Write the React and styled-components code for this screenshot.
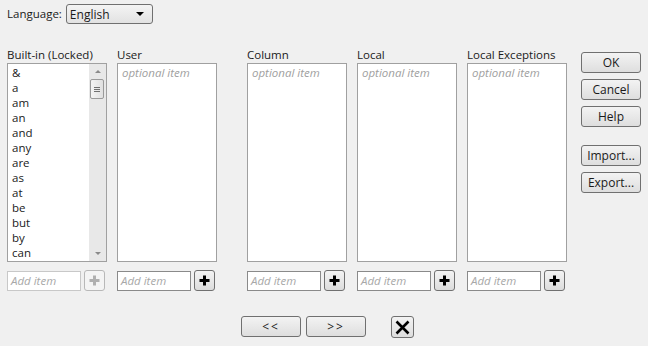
import React from "react";
import styled, { createGlobalStyle } from "styled-components";

const Global = createGlobalStyle`
  html, body { margin: 0; padding: 0; background: #f0f0f0; }
  body { font-family: "Open Sans", "Noto Sans", sans-serif; font-size: 11.5px; color: #1a1a1a; }
  * { box-sizing: border-box; }
`;

const Page = styled.div`
  width: 648px;
  height: 346px;
  background: #f0f0f0;
  padding: 4px 0 0 7px;
  display: flex;
  flex-direction: column;
`;

const TopRow = styled.div`
  display: flex;
  align-items: center;
  gap: 4px;
  height: 20px;
`;

const Label = styled.span`
  line-height: 16px;
  height: 16px;
  white-space: nowrap;
`;

const Select = styled.div`
  width: 87px;
  height: 20px;
  border: 1px solid #707070;
  border-radius: 3px;
  background: linear-gradient(#f4f4f4, #e2e2e2);
  display: flex;
  align-items: center;
  justify-content: space-between;
  padding: 0 8px 0 3px;
  font-size: 12px;
`;

const Caret = styled.span`
  width: 0;
  height: 0;
  border-left: 4px solid transparent;
  border-right: 4px solid transparent;
  border-top: 4px solid #000;
`;

const Main = styled.div`
  display: flex;
  margin-top: 23px;
`;

const Column = styled.div`
  display: flex;
  flex-direction: column;
  width: 100px;
  margin-left: ${(p) => p.$gap || 0}px;
`;

const ListBox = styled.div`
  position: relative;
  height: 199px;
  border: 1px solid #a0a0a0;
  background: #fff;
  padding: 1px 0 0 4px;
  overflow: hidden;
`;

const Item = styled.div`
  line-height: 15px;
  height: 15px;
  font-size: 11.5px;
`;

const Placeholder = styled.div`
  line-height: 15px;
  font-style: italic;
  color: #a0a0a0;
  font-size: 11.5px;
`;

const Scrollbar = styled.div`
  position: absolute;
  top: 0;
  right: 0;
  bottom: 0;
  width: 17px;
  background: #e8e8e8;
  display: flex;
  flex-direction: column;
  align-items: center;
`;

const Arrow = styled.div`
  height: 15px;
  width: 100%;
  display: flex;
  align-items: center;
  justify-content: center;
  &::after {
    content: "";
    border-left: 3px solid transparent;
    border-right: 3px solid transparent;
    ${(p) => (p.$down ? "border-top: 3px solid #8a8a8a;" : "border-bottom: 3px solid #8a8a8a;")}
  }
`;

const Thumb = styled.div`
  width: 14px;
  height: 20px;
  margin-left: -1px;
  border: 1px solid #9a9a9a;
  border-radius: 2px;
  background: linear-gradient(90deg, #f4f4f4, #e0e0e0);
  display: flex;
  flex-direction: column;
  align-items: center;
  justify-content: center;
  gap: 1px;
`;

const Grip = styled.span`
  width: 6px;
  height: 1px;
  background: #707070;
`;

const Spacer = styled.div`
  flex: 1;
`;

const AddRow = styled.div`
  display: flex;
  align-items: center;
  gap: 3px;
  margin-top: 8px;
  height: 21px;
`;

const AddInput = styled.div`
  width: 74px;
  height: 20px;
  border: 1px solid ${(p) => (p.$disabled ? "#c8c8c8" : "#8a8a8a")};
  background: #fff;
  padding-left: 3px;
  line-height: 18px;
  font-style: italic;
  color: #a8a8a8;
  font-size: 11.5px;
`;

const PlusBtn = styled.div`
  width: 21px;
  height: 21px;
  border: 1px solid ${(p) => (p.$disabled ? "#b8b8b8" : "#707070")};
  border-radius: 3px;
  background: ${(p) => (p.$disabled ? "#f4f4f4" : "linear-gradient(#f4f4f4, #dcdcdc)")};
  display: flex;
  align-items: center;
  justify-content: center;
`;

const ButtonCol = styled.div`
  display: flex;
  flex-direction: column;
  margin-left: 14px;
  margin-top: 5px;
  width: 60px;
`;

const Btn = styled.div`
  width: ${(p) => p.$w || 60}px;
  height: 21px;
  border: 1px solid #707070;
  border-radius: 3px;
  background: linear-gradient(#f3f3f3, #dedede);
  display: flex;
  align-items: center;
  justify-content: center;
  font-size: 12px;
  margin-top: ${(p) => p.$mt || 0}px;
  letter-spacing: ${(p) => p.$ls || 0}px;
`;

const BottomRow = styled.div`
  display: flex;
  justify-content: center;
  margin-top: 25px;
  gap: 5px;
`;

const CloseBtn = styled.div`
  width: 23px;
  height: 22px;
  margin-left: 20px;
  border: 1px solid #707070;
  border-radius: 3px;
  background: linear-gradient(#f3f3f3, #dedede);
  display: flex;
  align-items: center;
  justify-content: center;
`;

const Plus = ({ color }) => (
  <svg width="11" height="11" viewBox="0 0 11 11">
    <path d="M5.5 0.5v10M0.5 5.5h10" stroke={color} strokeWidth="3" />
  </svg>
);

const words = ["&", "a", "am", "an", "and", "any", "are", "as", "at", "be", "but", "by", "can"];

const lists = [
  { label: "User", gap: 10 },
  { label: "Column", gap: 30 },
  { label: "Local", gap: 10 },
  { label: "Local Exceptions", gap: 10 },
];

export default function App() {
  return (
    <Page>
      <Global />
      <TopRow>
        <Label>Language:</Label>
        <Select>
          <span>English</span>
          <Caret />
        </Select>
      </TopRow>
      <Main>
        <Column>
          <Label>Built-in (Locked)</Label>
          <ListBox>
            {words.map((w) => (
              <Item key={w}>{w}</Item>
            ))}
            <Scrollbar>
              <Arrow />
              <Thumb>
                <Grip />
                <Grip />
                <Grip />
              </Thumb>
              <Spacer />
              <Arrow $down />
            </Scrollbar>
          </ListBox>
          <AddRow>
            <AddInput $disabled>Add item</AddInput>
            <PlusBtn $disabled>
              <Plus color="#b0b0b0" />
            </PlusBtn>
          </AddRow>
        </Column>
        {lists.map((l) => (
          <Column key={l.label} $gap={l.gap}>
            <Label>{l.label}</Label>
            <ListBox>
              <Placeholder>optional item</Placeholder>
            </ListBox>
            <AddRow>
              <AddInput>Add item</AddInput>
              <PlusBtn>
                <Plus color="#000" />
              </PlusBtn>
            </AddRow>
          </Column>
        ))}
        <ButtonCol>
          <Btn>OK</Btn>
          <Btn $mt={6}>Cancel</Btn>
          <Btn $mt={6}>Help</Btn>
          <Btn $mt={18}>Import...</Btn>
          <Btn $mt={6}>Export...</Btn>
        </ButtonCol>
      </Main>
      <BottomRow>
        <Btn $w={60} $ls={2}>&lt;&lt;</Btn>
        <Btn $w={60} $ls={2}>&gt;&gt;</Btn>
        <CloseBtn>
          <svg width="15" height="15" viewBox="0 0 15 15">
            <path d="M1.5 1.5L13.5 13.5M13.5 1.5L1.5 13.5" stroke="#000" strokeWidth="2.6" />
          </svg>
        </CloseBtn>
      </BottomRow>
    </Page>
  );
}
